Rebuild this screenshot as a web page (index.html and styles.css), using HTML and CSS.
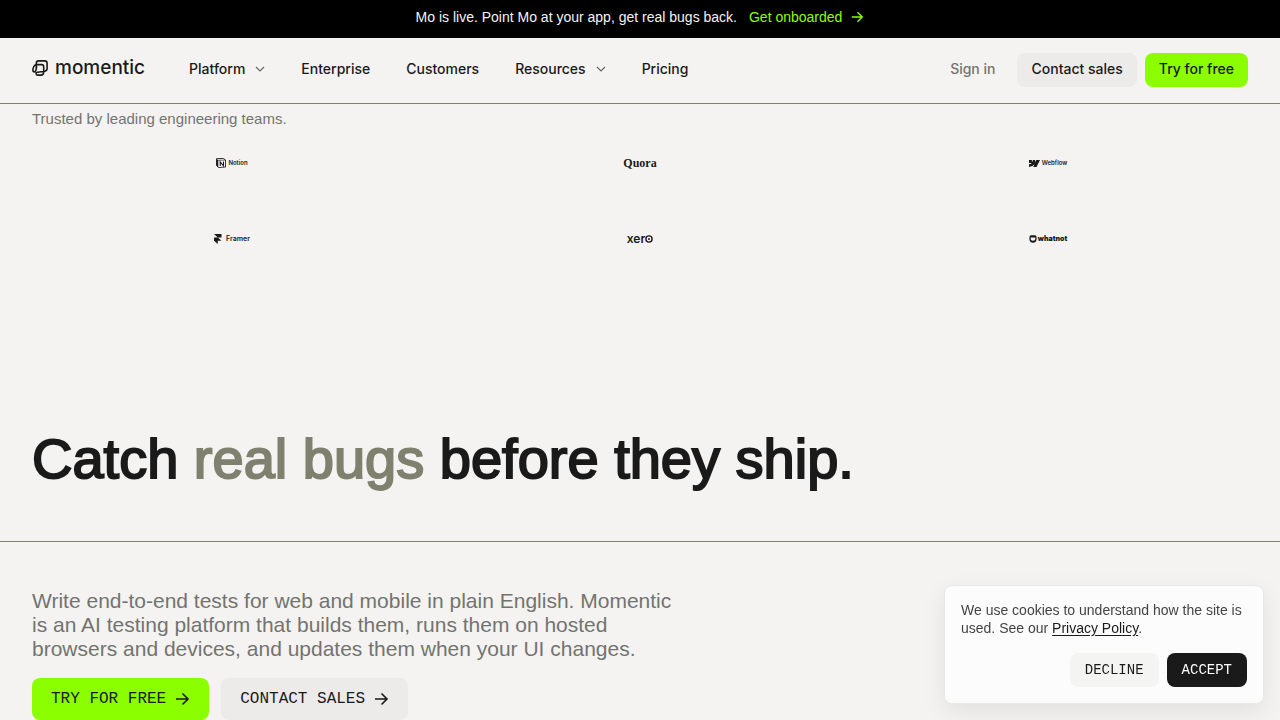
FILE: index.html
```html
<!DOCTYPE html>
<html lang="en">
<head>
    <meta charset="UTF-8">
    <meta name="viewport" content="width=device-width, initial-scale=1.0">
    <title>Momentic</title>
    <link rel="stylesheet" href="styles.css">
</head>
<body>
    <svg class="sprite" aria-hidden="true">
        <symbol id="arrow" viewBox="0 0 16 16">
            <path d="M2 8h12M8.500 2.500L14 8l-5.500 5.500" fill="none" stroke="currentColor" stroke-width="1.600"/>
        </symbol>
        <symbol id="chevron" viewBox="0 0 10 10">
            <path d="M1 3l4 4 4-4" fill="none" stroke="currentColor" stroke-width="1.200"/>
        </symbol>
    </svg>
    <div class="banner">
        <span>Mo is live. Point Mo at your app, get real bugs back.</span>
        <a class="banner-link" href="#">Get onboarded <svg class="arrow-small"><use href="#arrow"/></svg></a>
    </div>
    <header class="header">
        <a class="brand" href="#">
            <svg class="brand-mark" viewBox="0 0 16 16" fill="none" stroke="currentColor" stroke-width="1.600">
                <path d="M4.300 9.500V3.300Q4.300 .9 6.700 .9H12.700Q15.100 .9 15.100 3.300V8.500Q15.100 10.700 12.900 11.300L5.500 12.300Q4.100 12.600 4.100 13.800Q4.100 15.100 5.600 15.100H8.800Q11.700 15.100 11.700 12.200V6.800Q11.700 4.600 9.500 4.600H5Q2.800 4.600 1.800 6.500Q.9 8.200 .9 10Q.9 11.900 2.300 11.900Q3.600 11.900 3.900 10.300L4.700 6.400"/>
            </svg>
            <span>momentic</span>
        </a>
        <nav class="nav">
            <button class="nav-item" type="button">Platform <svg class="chevron"><use href="#chevron"/></svg></button>
            <a class="nav-item" href="#">Enterprise</a>
            <a class="nav-item" href="#">Customers</a>
            <button class="nav-item" type="button">Resources <svg class="chevron"><use href="#chevron"/></svg></button>
            <a class="nav-item" href="#">Pricing</a>
        </nav>
        <div class="actions">
            <a class="sign-in" href="#">Sign in</a>
            <a class="button" href="#">Contact sales</a>
            <a class="button green" href="#">Try for free</a>
        </div>
    </header>
    <main>
        <section class="trusted">
            <p class="trusted-title">Trusted by leading engineering teams.</p>
            <ul class="logos">
                <li class="logo notion">
                    <svg width="10" height="10" viewBox="0 0 10 10">
                        <path d="M.5 .7L7.300 .4 9.500 2V9L2.400 9.500 .5 7.500Z" fill="#fff" stroke="#1a1a1a" stroke-width=".9"/>
                        <path d="M.5 .7L2.300 2.300V9.300L.5 7.500Z" fill="#1a1a1a"/>
                        <path d="M2.300 2.300L9.500 2" stroke="#1a1a1a" stroke-width=".7"/>
                        <path d="M4.200 8V3.800L7.500 7.800V3.500" fill="none" stroke="#1a1a1a" stroke-width="1.100"/>
                    </svg>
                    <span>Notion</span>
                </li>
                <li class="logo quora"><span>Quora</span></li>
                <li class="logo webflow">
                    <svg width="11" height="7" viewBox="0 0 11 7">
                        <path d="M11 0L7.500 7H4.200L5.500 4.200Q4 6.500 0 7V4.200Q1.800 4.200 2.700 3H0V0H2.900V2.400L4 0H6.200V2.400L7.300 0Z" fill="#1a1a1a"/>
                    </svg>
                    <span>Webflow</span>
                </li>
                <li class="logo framer">
                    <svg width="8" height="10" viewBox="0 0 8 10">
                        <path d="M0 0H7.500V3.400H3.800L7.500 6.700H3.800V10L0 6.700V3.400H3.800Z" fill="#1a1a1a"/>
                    </svg>
                    <span>Framer</span>
                </li>
                <li class="logo xero">
                    <span>xer</span>
                    <svg width="8" height="8" viewBox="0 0 8 8">
                        <circle cx="4" cy="4" r="3.100" fill="none" stroke="#1a1a1a" stroke-width="1.400"/>
                        <circle cx="4" cy="4" r="1" fill="#1a1a1a"/>
                    </svg>
                </li>
                <li class="logo whatnot">
                    <svg width="8" height="8" viewBox="0 0 8 8">
                        <path d="M1.500 .3H6.500Q8 1.500 7.600 4Q7.600 7.700 4 7.700Q.4 7.700 .4 4Q0 1.500 1.500 .3Z" fill="#1a1a1a"/>
                        <path d="M1.700 2.500H6.300V4Q6.300 5.700 4 5.700Q1.700 5.700 1.700 4Z" fill="#f4f3f1"/>
                    </svg>
                    <span>whatnot</span>
                </li>
            </ul>
        </section>
        <section class="hero">
            <h1>Catch <span class="accent">real bugs</span> before they ship.</h1>
        </section>
        <section class="intro">
            <p>Write end-to-end tests for web and mobile in plain English. Momentic is an AI testing platform that builds them, runs them on hosted browsers and devices, and updates them when your UI changes.</p>
            <div class="intro-buttons">
                <a class="button large green" href="#">TRY FOR FREE <svg class="arrow"><use href="#arrow"/></svg></a>
                <a class="button large" href="#">CONTACT SALES <svg class="arrow"><use href="#arrow"/></svg></a>
            </div>
        </section>
    </main>
    <aside class="cookies" aria-label="Cookies">
        <p>We use cookies to understand how the site is used. See our <a href="#">Privacy Policy</a>.</p>
        <div class="cookie-buttons">
            <button class="button mono" type="button">DECLINE</button>
            <button class="button mono dark" type="button">ACCEPT</button>
        </div>
    </aside>
</body>
</html>
```
FILE: styles.css
```css
* {
    box-sizing: border-box;
}
body {
    margin: 0;
    background: #f4f3f1;
    color: #1a1a1a;
    font-family: "Liberation Sans", Arial, sans-serif;
    font-size: 14px;
}
a {
    color: inherit;
    text-decoration: none;
}
button {
    border: 0;
    background: none;
    color: inherit;
    font: inherit;
    cursor: pointer;
}
p, h1, ul {
    margin: 0;
    padding: 0;
}
.sprite {
    display: none;
}
.banner {
    display: flex;
    align-items: center;
    justify-content: center;
    gap: 12px;
    height: 38px;
    padding-bottom: 4px;
    background: #000;
    color: #f4f3f1;
}
.banner-link {
    display: flex;
    align-items: center;
    gap: 8px;
    color: #8bff00;
}
.arrow-small {
    width: 14px;
    height: 14px;
}
.header {
    display: flex;
    align-items: center;
    height: 66px;
    padding: 0 32px 2px;
    border-bottom: 1px solid #80806f;
    font-family: Inter, "Liberation Sans", sans-serif;
    font-weight: 500;
}
.brand {
    display: flex;
    align-items: center;
    gap: 7px;
    padding-bottom: 4px;
    font-size: 19px;
    line-height: 24px;
}
.brand-mark {
    width: 16px;
    height: 16px;
}
.nav {
    display: flex;
    gap: 36px;
    margin-left: 44px;
    padding-bottom: 2px;
}
.nav-item {
    display: flex;
    align-items: center;
    gap: 10px;
    padding: 0;
    line-height: 20px;
}
.chevron {
    width: 10px;
    height: 10px;
    color: #666;
}
.actions {
    display: flex;
    align-items: center;
    gap: 8px;
    margin-left: auto;
}
.sign-in {
    padding: 0 14px 2px;
    color: #737370;
}
.button {
    display: flex;
    align-items: center;
    justify-content: center;
    height: 34px;
    padding: 0 14px 2px;
    border-radius: 8px;
    background: #ecebe9;
}
.button.green {
    background: #8bff00;
}
.trusted {
    padding: 5px 32px 0;
}
.trusted-title {
    color: #737370;
    font-size: 15px;
    line-height: 20px;
}
.logos {
    display: grid;
    grid-template-columns: repeat(3, 1fr);
    grid-auto-rows: 68px;
    gap: 8px;
    list-style: none;
}
.logo {
    display: flex;
    align-items: center;
    justify-content: center;
    gap: 2px;
    font-family: Inter, "Liberation Sans", sans-serif;
    font-size: 7px;
    font-weight: 600;
    line-height: 10px;
}
.notion {
    font-size: 6px;
}
.quora {
    font-family: "Liberation Serif", "Times New Roman", serif;
    font-size: 12px;
    font-weight: 700;
}
.framer {
    gap: 4px;
}
.xero {
    gap: 0;
    font-size: 12px;
}
.webflow {
    font-size: 6px;
}
.whatnot {
    gap: 1px;
    font-weight: 900;
}
.hero {
    padding: 150px 32px 46px;
    border-bottom: 1px solid #80806f;
}
h1 {
    font-size: 56px;
    font-weight: 400;
    line-height: 72px;
    -webkit-text-stroke: 2px currentColor;
}
.accent {
    color: #80806f;
}
.intro {
    padding: 47px 32px 0;
}
.intro p {
    max-width: 650px;
    color: #737370;
    font-size: 21px;
    line-height: 24px;
}
.intro-buttons {
    display: flex;
    gap: 12px;
    margin-top: 17px;
}
.button.large {
    gap: 8px;
    height: 42px;
    padding: 0 19px;
    font-family: "Liberation Mono", monospace;
    font-size: 16px;
}
.arrow {
    width: 16px;
    height: 16px;
}
.cookies {
    position: fixed;
    right: 16px;
    bottom: 16px;
    width: 320px;
    padding: 15px 16px 16px;
    border: 1px solid #e8e8e6;
    border-radius: 8px;
    background: #fcfcfc;
    box-shadow: 0 8px 24px rgba(0, 0, 0, 0.08);
}
.cookies p {
    color: #444;
    line-height: 18px;
}
.cookies p a {
    color: #1a1a1a;
    text-decoration: underline;
    text-underline-offset: 2px;
}
.cookie-buttons {
    display: flex;
    justify-content: flex-end;
    gap: 8px;
    margin-top: 16px;
}
.button.mono {
    padding: 0 15px;
    background: #f4f4f3;
    font-family: "Liberation Mono", monospace;
    font-size: 14px;
}
.button.dark {
    background: #1a1a1a;
    color: #fff;
}
```
